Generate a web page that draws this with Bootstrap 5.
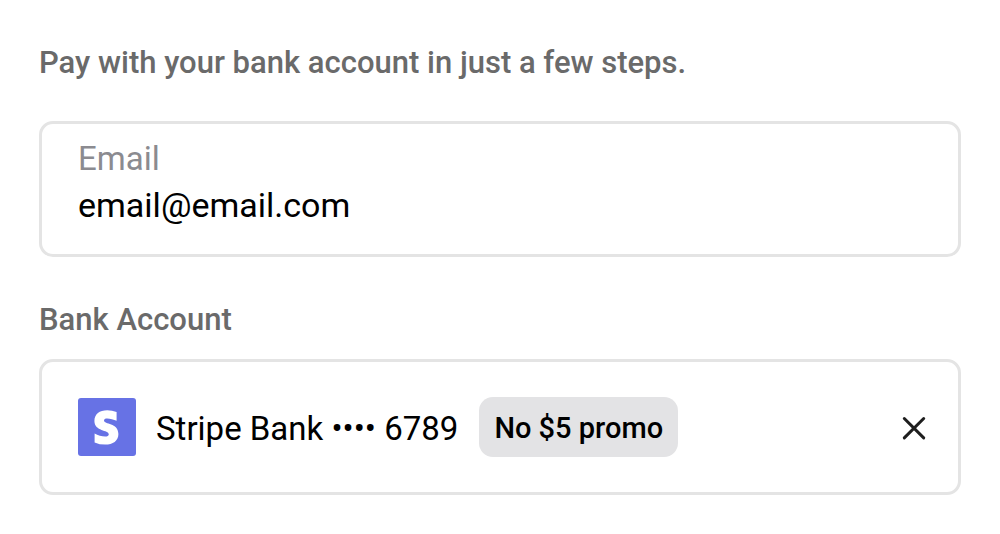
<!DOCTYPE html>
<html lang="en">
<head>
<meta charset="utf-8">
<meta name="viewport" content="width=device-width, initial-scale=1">
<title>Pay with bank account</title>
<link href="https://cdn.jsdelivr.net/npm/bootstrap@5.3.0/dist/css/bootstrap.min.css" rel="stylesheet">
<style>
  body { font-family: Roboto, sans-serif; color: #000; background: #fff; }
  .pay-form { padding: 43px 39px 39px; }
  .pay-label { font-size: 31px; line-height: 40px; font-weight: 500; color: #6a6a6a; }
  .pay-box { border: 3px solid #e4e4e4; border-radius: 14px; min-height: 136px; }
  .pay-text { font-size: 33px; line-height: 46px; }
  .email-box { padding: 12px 36px 26px; margin: 38px 0 43px; }
  .email-box label { color: #8b8b90; }
  .email-box input { font-size: 34px; color: #000; height: 46px; outline: 0; }
  .bank-box { padding: 0 30px 0 36px; margin-top: 19px; gap: 20px; }
  .bank-name { padding: 4px 1px 0 0; }
  .promo-badge { background: #e3e3e5; border-radius: 14px; padding: 11px 15px 9px; font-size: 29px; line-height: 40px; font-weight: 500; }
  .remove-btn { line-height: 0; }
</style>
</head>
<body>
<form class="pay-form">
  <p class="pay-label mb-0">Pay with your bank account in just a few steps.</p>
  <div class="pay-box email-box d-flex flex-column">
    <label class="pay-text" for="email">Email</label>
    <input class="pay-text form-control-plaintext p-0 border-0" id="email" type="email" value="email@email.com">
  </div>
  <h2 class="pay-label mb-0">Bank Account</h2>
  <div class="pay-box bank-box d-flex align-items-center">
    <svg class="flex-shrink-0" width="58" height="58" viewBox="0 0 58 58" aria-hidden="true">
      <rect width="58" height="58" rx="3" fill="#6772e5"/>
      <path fill="#fff" d="M26 22.500c0-1.500 1.200-2.100 3.200-2.100 2.900 0 6.500.9 9.400 2.400v-8.800A25 25 0 0 0 29.200 12.200c-7.700 0-12.800 4-12.800 10.700 0 10.500 14.400 8.800 14.400 13.300 0 1.800-1.500 2.300-3.700 2.300-3.200 0-7.300-1.300-10.500-3.100v9a27 27 0 0 0 10.500 2.200c7.900 0 13.300-3.900 13.300-10.700C40.400 24.600 26 26.600 26 22.500z"/>
    </svg>
    <span class="pay-text bank-name">Stripe Bank •••• 6789</span>
    <span class="promo-badge">No $5 promo</span>
    <button class="remove-btn btn p-0 border-0 ms-auto" type="button" aria-label="Remove bank account">
      <svg width="28" height="30" viewBox="0 0 28 30" fill="none" stroke="#1e1e1e" stroke-width="3" stroke-linecap="round" aria-hidden="true"><path d="M4.300 6.500l19.400 19.400M23.700 6.500L4.300 25.900"/></svg>
    </button>
  </div>
</form>
<script src="https://cdn.jsdelivr.net/npm/bootstrap@5.3.0/dist/js/bootstrap.bundle.min.js"></script>
</body>
</html>
